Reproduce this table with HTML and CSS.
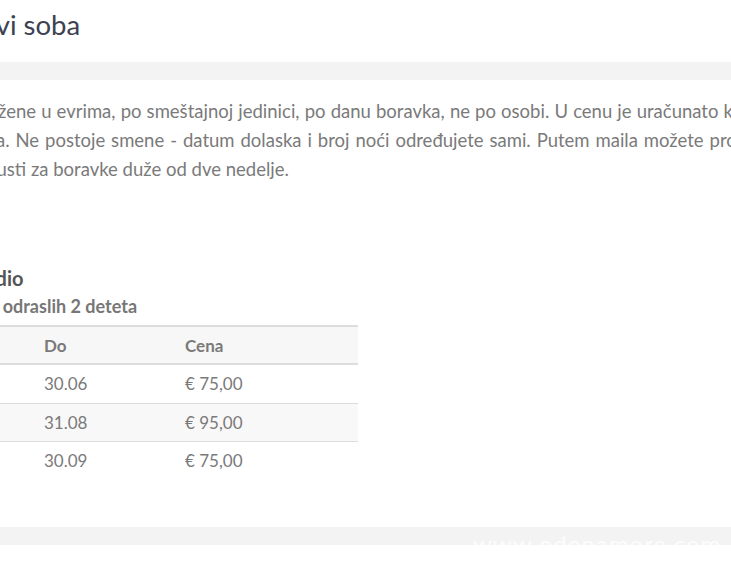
FILE: index.html
```html
<!DOCTYPE html>
<html lang="sr">
<head>
<meta charset="utf-8">
<title>Cene i tipovi soba</title>
<link rel="stylesheet" href="styles.css">
</head>
<body>
<div class="page">
  <header class="title-wrap">
    <h1 class="title">Cene i tipovi soba</h1>
  </header>
  <div class="band"></div>
  <main class="content">
    <p class="intro"><span class="line line-1">Sve cene su izražene u evrima, po smeštajnoj jedinici, po danu boravka, ne po osobi. U cenu je uračunato korišćenje klime</span><span class="line line-2">i boravišna taksa. Ne postoje smene - datum dolaska i broj noći određujete sami. Putem maila možete proveriti slobodne termine</span><span class="line">i dogovoriti popusti za boravke duže od dve nedelje.</span></p>
    <section class="room">
      <h2 class="room-name">Apartman Studio</h2>
      <p class="room-cap">Kapacitet: 2 odraslih 2 deteta</p>
      <table class="prices">
        <thead>
          <tr><th class="c1">Od</th><th class="c2">Do</th><th class="c3">Cena</th></tr>
        </thead>
        <tbody>
          <tr><td>01.06</td><td>30.06</td><td>€ 75,00</td></tr>
          <tr class="alt"><td>01.07</td><td>31.08</td><td>€ 95,00</td></tr>
          <tr><td>01.09</td><td>30.09</td><td>€ 75,00</td></tr>
        </tbody>
      </table>
    </section>
  </main>
  <div class="band band-bottom">
    <span class="watermark">www.odenamore.com</span>
  </div>
</div>
</body>
</html>
```

FILE: styles.css
```css
html, body {
  margin: 0;
  padding: 0;
  background: #ffffff;
}
body {
  font-family: Lato, "Open Sans", "Liberation Sans", sans-serif;
  overflow: hidden;
  width: 731px;
  height: 565px;
}
.page {
  margin-left: -105px;
  width: 960px;
}
.title-wrap {
  padding: 8px 0 0 0;
  height: 62px;
  box-sizing: border-box;
}
.title {
  margin: 0 0 0 -30px;
  font-size: 27.5px;
  font-weight: 400;
  color: #3b4250;
  line-height: 34px;
  white-space: nowrap;
}
.band {
  height: 18px;
  background: #f3f3f3;
  margin-left: 105px;
}
.content {
  padding-top: 17px;
  height: 447px;
  box-sizing: border-box;
}
.intro {
  margin: 0 0 0 -26.5px;
  font-size: 18.5px;
  line-height: 29px;
  color: #7a7a7a;
  white-space: nowrap;
}
.line {
  display: block;
}
.line-1 {
  word-spacing: 0.4px;
}
.line-2 {
  word-spacing: 1.2px;
}
.room {
  margin-top: 82px;
}
.room-name {
  margin: 0 0 0 -22px;
  font-size: 20px;
  font-weight: 700;
  color: #555555;
  line-height: 24px;
  white-space: nowrap;
}
.room-cap {
  margin: 6px 0 9px 7px;
  font-size: 18px;
  font-weight: 700;
  color: #777777;
  line-height: 20px;
  white-space: nowrap;
}
.prices {
  width: 463px;
  border-collapse: collapse;
  table-layout: fixed;
  font-size: 17px;
  color: #7a7a7a;
}
.prices .c1 { width: 119px; }
.prices .c2 { width: 121px; }
.prices .c3 { width: 163px; }
.prices th,
.prices td {
  text-align: left;
  padding: 0 10px;
  height: 37.5px;
  border-top: 1px solid #dddddd;
}
.prices thead th {
  height: 36px;
  background: #f7f7f7;
  font-weight: 700;
  color: #7a7a7a;
  border-top: 2px solid #dddddd;
  border-bottom: 2px solid #dddddd;
}
.prices tr.alt td {
  background: #f8f8f8;
}
.band-bottom {
  position: relative;
}
.watermark {
  position: absolute;
  left: 473px;
  top: 2px;
  font-size: 24px;
  line-height: 29px;
  color: rgba(255,255,255,0.8);
  letter-spacing: 1px;
  white-space: nowrap;
}
```
